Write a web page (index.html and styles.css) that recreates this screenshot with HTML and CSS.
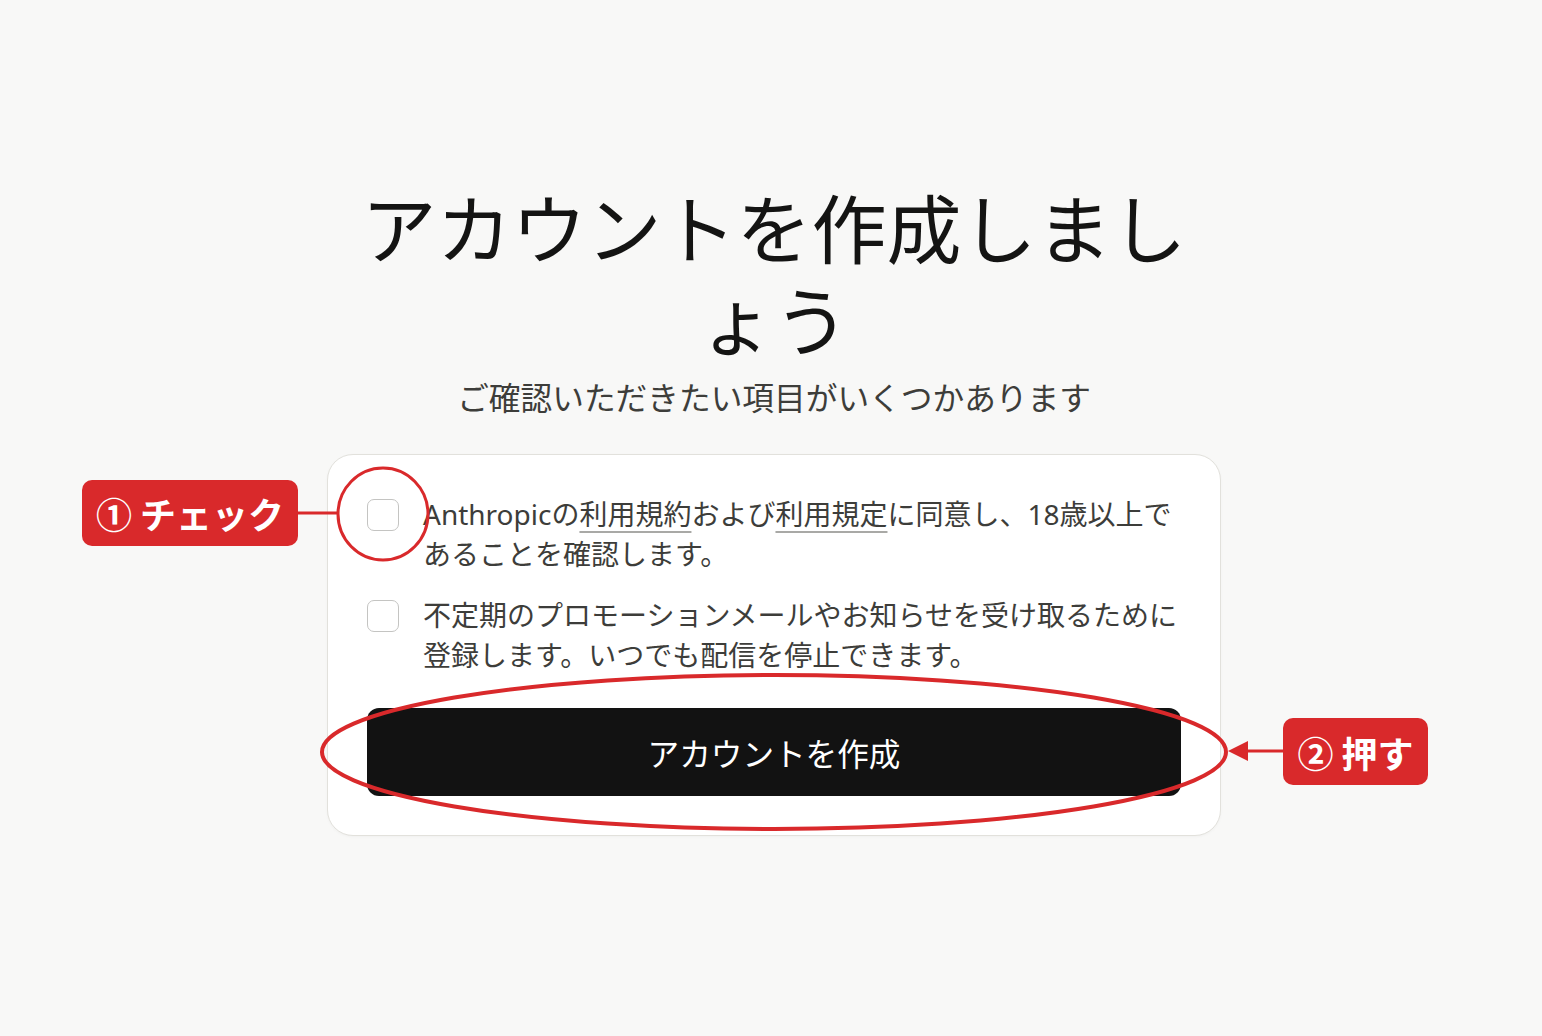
FILE: index.html
```html
<!DOCTYPE html>
<html lang="ja">
<head>
<meta charset="utf-8">
<title>アカウントを作成</title>
<link rel="stylesheet" href="styles.css">
</head>
<body>
<main class="page">
  <section class="signup">
    <h1 class="title">アカウントを作成しましょう</h1>
    <p class="subtitle">ご確認いただきたい項目がいくつかあります</p>
    <div class="card">
      <label class="check-row">
        <span class="checkbox"></span>
        <span class="check-text">Anthropicの<span class="link">利用規約</span>および<span class="link">利用規定</span>に同意し、18歳以上であることを確認します。</span>
      </label>
      <label class="check-row">
        <span class="checkbox"></span>
        <span class="check-text">不定期のプロモーションメールやお知らせを受け取るために登録します。いつでも配信を停止できます。</span>
      </label>
      <button class="submit" type="button">アカウントを作成</button>
    </div>
  </section>
</main>

<svg class="marks" viewBox="0 0 1542 1036" width="1542" height="1036" aria-hidden="true">
  <line x1="298" y1="513" x2="339" y2="513" stroke="#d9292b" stroke-width="3"/>
  <ellipse cx="383" cy="514" rx="45" ry="46" fill="none" stroke="#d9292b" stroke-width="3"/>
  <ellipse cx="774" cy="752" rx="452" ry="77" fill="none" stroke="#d9292b" stroke-width="4"/>
  <line x1="1284" y1="751" x2="1244" y2="751" stroke="#d9292b" stroke-width="3"/>
  <polygon points="1228,751 1248,741 1248,761" fill="#d9292b"/>
</svg>
<div class="badge badge-one">① チェック</div>
<div class="badge badge-two">② 押す</div>
</body>
</html>
```

FILE: styles.css
```css
* { box-sizing: border-box; }

html, body {
  margin: 0;
  padding: 0;
}

body {
  width: 1542px;
  height: 1036px;
  overflow: hidden;
  position: relative;
  background: #f8f8f7;
  font-family: "Noto Sans", "Noto Sans CJK JP", sans-serif;
  color: #3d3d3a;
}

.page {
  display: flex;
  justify-content: center;
  padding-top: 180px;
  padding-left: 6px;
}

.signup {
  width: 894px;
  display: flex;
  flex-direction: column;
  align-items: center;
}

.title {
  margin: 0;
  font-family: "Noto Sans CJK JP", sans-serif;
  font-weight: 400;
  font-size: 75px;
  line-height: 92px;
  color: #141413;
  text-align: center;
  width: 894px;
}

.subtitle {
  margin: 10px 0 0;
  font-family: "Noto Sans CJK JP", sans-serif;
  font-size: 31.7px;
  line-height: 44px;
  color: #3d3d3a;
  text-align: center;
}

.card {
  margin-top: 36px;
  width: 894px;
  background: #ffffff;
  border: 1px solid #e2e1dc;
  border-radius: 26px;
  padding: 39px 39px 39px;
  display: flex;
  flex-direction: column;
  box-shadow: 0 1px 3px rgba(0, 0, 0, 0.03);
}

.check-row {
  display: flex;
  align-items: flex-start;
  gap: 24px;
}

.check-row + .check-row {
  margin-top: 21px;
}

.checkbox {
  flex: none;
  width: 32px;
  height: 32px;
  margin-top: 5px;
  border: 1.5px solid #c4c4c2;
  border-radius: 7px;
  background: #ffffff;
}

.check-text {
  font-size: 28px;
  line-height: 40px;
  color: #3d3d3a;
}

.link {
  text-decoration: underline;
  text-decoration-color: #a9a9a6;
  text-decoration-thickness: 1.5px;
  text-underline-offset: 6px;
}

.submit {
  margin-top: 33px;
  height: 88px;
  width: 100%;
  border: none;
  border-radius: 12px;
  background: #121212;
  color: #ffffff;
  font-family: "Noto Sans CJK JP", sans-serif;
  font-size: 31.6px;
  cursor: pointer;
}

.marks {
  position: absolute;
  left: 0;
  top: 0;
  pointer-events: none;
}

.badge {
  position: absolute;
  background: #d9292b;
  color: #ffffff;
  font-family: "Noto Sans CJK JP", sans-serif;
  font-weight: 700;
  font-size: 36px;
  border-radius: 10px;
  display: flex;
  align-items: center;
  justify-content: center;
  white-space: nowrap;
}

.badge-one {
  left: 82px;
  top: 480px;
  width: 216px;
  height: 66px;
}

.badge-two {
  left: 1283px;
  top: 718px;
  width: 145px;
  height: 67px;
}
```
